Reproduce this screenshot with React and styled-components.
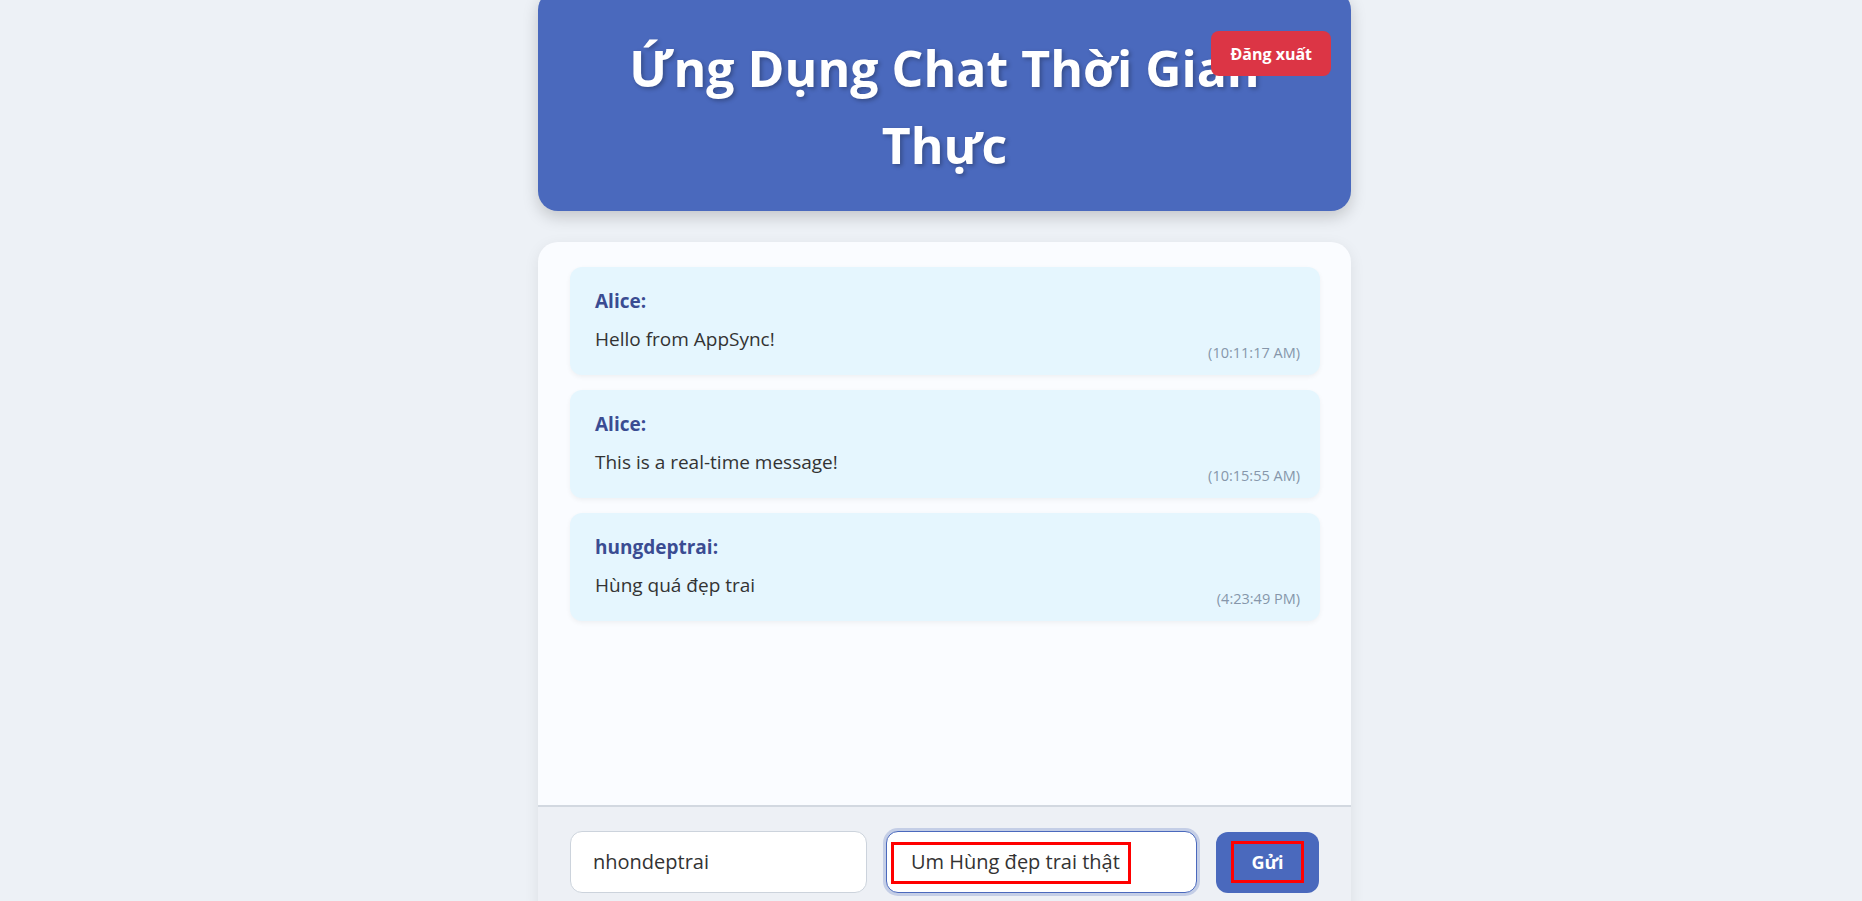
import React from "react";
import styled, { createGlobalStyle } from "styled-components";

const GlobalStyle = createGlobalStyle`
  html, body {
    margin: 0;
    padding: 0;
    background: #edf1f6;
    font-family: "Segoe UI", "Open Sans", "Noto Sans", sans-serif;
    line-height: 1.6;
    overflow: hidden;
  }
  * { box-sizing: border-box; }
`;

const Page = styled.div`
  display: flex;
  justify-content: center;
  padding-left: 27px;
`;

const Container = styled.div`
  width: 813px;
  display: flex;
  flex-direction: column;
`;

const Header = styled.header`
  position: relative;
  margin-top: -10px;
  padding: 40px 40px 27px;
  background: #4a69bd;
  border-radius: 20px;
  box-shadow: 0 6px 16px rgba(0, 0, 0, 0.18);
  color: #fff;
  text-align: center;
`;

const Title = styled.h1`
  margin: 0 auto;
  max-width: 700px;
  font-size: 50px;
  line-height: 76.8px;
  font-weight: 700;
  text-shadow: 2px 2px 4px rgba(0, 0, 0, 0.28);
`;

const LogoutButton = styled.button`
  position: absolute;
  top: 41px;
  right: 20px;
  height: 45px;
  padding: 0 19px;
  background: #dc3545;
  border: none;
  border-radius: 8px;
  color: #fff;
  font-family: inherit;
  font-size: 16px;
  font-weight: 700;
  cursor: pointer;
`;

const ChatBox = styled.section`
  margin-top: 31px;
  background: #fafcff;
  border-radius: 20px;
  overflow: hidden;
  box-shadow: 0 4px 15px rgba(0, 0, 0, 0.08);
`;

const MessageList = styled.div`
  height: 563px;
  padding: 25px 31px 25px 32px;
  display: flex;
  flex-direction: column;
  gap: 15px;
`;

const Message = styled.div`
  padding: 20px 20px 12px 25px;
  background: #e5f6fe;
  border-radius: 12px;
  box-shadow: 0 2px 5px rgba(0, 0, 0, 0.05);
`;

const Sender = styled.div`
  font-size: 19px;
  line-height: 28.8px;
  font-weight: 700;
  color: #3a4c92;
  margin-bottom: 10px;
`;

const Body = styled.p`
  margin: 0;
  font-size: 19px;
  line-height: 28.8px;
  color: #333;
`;

const Time = styled.span`
  display: block;
  margin-top: -12px;
  margin-bottom: -2px;
  text-align: right;
  font-size: 14.5px;
  line-height: 22.4px;
  color: #8696aa;
`;

const InputBar = styled.div`
  display: flex;
  gap: 19px;
  padding: 24px 32px 30px;
  border-top: 2px solid #d2d8e0;
  background: #edf0f5;
`;

const Field = styled.div`
  position: relative;
  display: flex;
  flex: ${(p) => p.$flex};
`;

const TextInput = styled.input`
  width: 100%;
  height: 62px;
  padding: 0 ${(p) => (p.$focused ? "24px" : "22px")};
  background: #fff;
  border: 1px solid ${(p) => (p.$focused ? "#4a69bd" : "#ccd3dc")};
  border-radius: 12px;
  box-shadow: ${(p) => (p.$focused ? "0 0 0 3px rgba(74, 105, 189, 0.25)" : "none")};
  font-family: inherit;
  font-size: 20px;
  color: #333;
  outline: none;
`;

const Annotation = styled.span`
  position: absolute;
  left: 5px;
  top: 11px;
  width: 240px;
  height: 42px;
  border: 3px solid #ff0000;
  pointer-events: none;
`;

const SendButton = styled.button`
  flex: 0 0 103px;
  height: 61px;
  margin-top: 1px;
  display: flex;
  align-items: center;
  justify-content: center;
  background: #4a69bd;
  border: none;
  border-radius: 12px;
  color: #fff;
  font-family: inherit;
  font-size: 18px;
  font-weight: 700;
  cursor: pointer;
`;

const SendLabel = styled.span`
  display: inline-block;
  padding: 3px 17px;
  border: 3px solid #ff0000;
  line-height: 30.4px;
`;

const messages = [
  { user: "Alice", text: "Hello from AppSync!", time: "10:11:17 AM" },
  { user: "Alice", text: "This is a real-time message!", time: "10:15:55 AM" },
  { user: "hungdeptrai", text: "Hùng quá đẹp trai", time: "4:23:49 PM" },
];

export default function App() {
  return (
    <>
      <GlobalStyle />
      <Page>
        <Container>
          <Header>
            <Title>Ứng Dụng Chat Thời Gian Thực</Title>
            <LogoutButton>Đăng xuất</LogoutButton>
          </Header>
          <ChatBox>
            <MessageList>
              {messages.map((m, i) => (
                <Message key={i}>
                  <Sender>{m.user}:</Sender>
                  <Body>{m.text}</Body>
                  <Time>({m.time})</Time>
                </Message>
              ))}
            </MessageList>
            <InputBar>
              <Field $flex="0 0 297px">
                <TextInput defaultValue="nhondeptrai" />
              </Field>
              <Field $flex="1">
                <TextInput $focused defaultValue="Um Hùng đẹp trai thật" />
                <Annotation />
              </Field>
              <SendButton>
                <SendLabel>Gửi</SendLabel>
              </SendButton>
            </InputBar>
          </ChatBox>
        </Container>
      </Page>
    </>
  );
}
